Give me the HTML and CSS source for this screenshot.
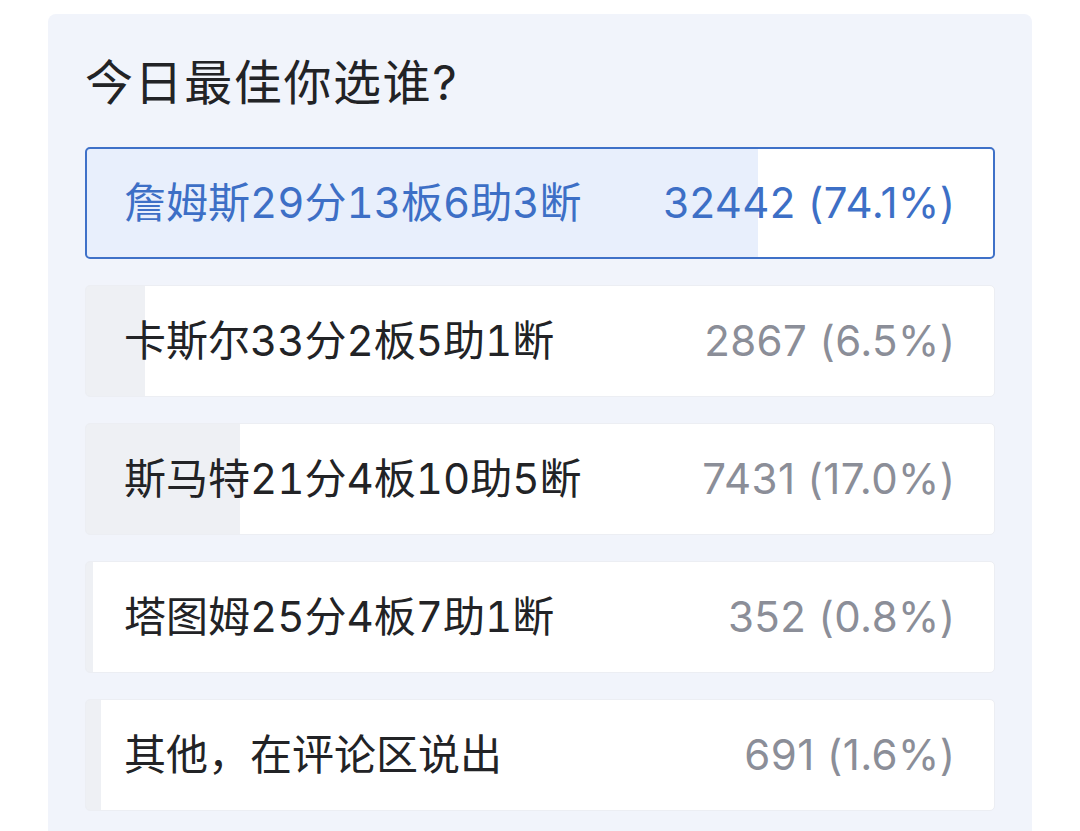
FILE: index.html
```html
<!DOCTYPE html>
<html lang="zh">
<head>
<meta charset="utf-8">
<link rel="stylesheet" href="styles.css">
</head>
<body>
<div class="card">
  <div class="title">今日最佳你选谁?</div>
  <div class="options">
    <div class="opt selected" style="--p:74.1%"><span class="label">詹姆斯29分13板6助3断</span><span class="count">32442 (74.1%)</span></div>
    <div class="opt" style="--p:6.5%"><span class="label">卡斯尔33分2板5助1断</span><span class="count">2867 (6.5%)</span></div>
    <div class="opt" style="--p:17%"><span class="label">斯马特21分4板10助5断</span><span class="count">7431 (17.0%)</span></div>
    <div class="opt" style="--p:0.8%"><span class="label">塔图姆25分4板7助1断</span><span class="count">352 (0.8%)</span></div>
    <div class="opt" style="--p:1.6%"><span class="label">其他，在评论区说出</span><span class="count">691 (1.6%)</span></div>
  </div>
</div>
</body>
</html>
```
FILE: styles.css
```css
html, body {
  margin: 0;
  padding: 0;
  background: #ffffff;
  height: 831px;
  overflow: hidden;
}
body {
  font-family: "Inter", "Noto Sans CJK SC", "Noto Sans", sans-serif;
}
.card {
  margin: 14px 0 0 48px;
  width: 984px;
  height: 900px;
  box-sizing: border-box;
  background: #f1f4fb;
  border-radius: 8px;
  padding: 37px 37px 0 37px;
}
.title {
  font-size: 48px;
  line-height: 64px;
  color: #222326;
  letter-spacing: 1.6px;
}
.options {
  margin-top: 32px;
  display: flex;
  flex-direction: column;
  gap: 26px;
}
.opt {
  height: 112px;
  box-sizing: border-box;
  border: 1px solid #eceef3;
  border-radius: 5px;
  background: linear-gradient(to right, #eef0f4 0, #eef0f4 var(--p), #ffffff var(--p), #ffffff 100%);
  display: flex;
  align-items: center;
  justify-content: space-between;
  padding: 0 39px 0 38px;
  font-size: 42px;
  line-height: 56px;
}
.opt .label {
  color: #222326;
  font-variant-numeric: tabular-nums;
}
.opt .count {
  color: #8b8e98;
  letter-spacing: 0.4px;
  margin-right: -0.4px;
}
.opt.selected {
  border: 2px solid #3f71c8;
  background: linear-gradient(to right, #e8effc 0, #e8effc var(--p), #ffffff var(--p), #ffffff 100%);
  padding: 0 38px 0 37px;
}
.opt.selected .label,
.opt.selected .count {
  color: #3d6fc6;
}
```
